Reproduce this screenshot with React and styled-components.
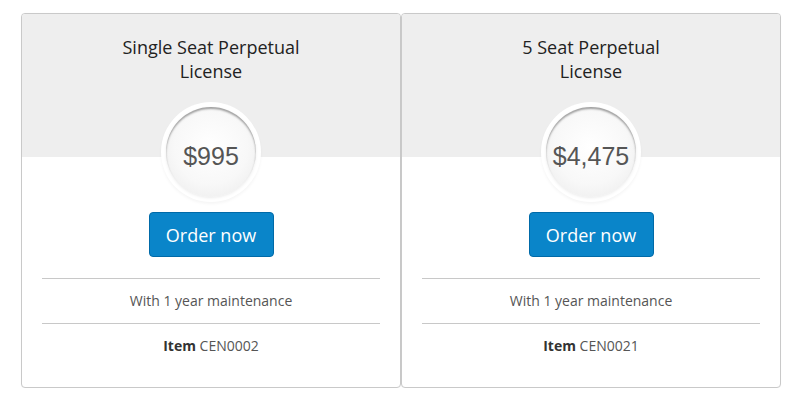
import React from "react";
import styled, { createGlobalStyle } from "styled-components";

const Global = createGlobalStyle`
  html, body { margin: 0; padding: 0; background: #fff; }
  body { font-family: "Open Sans", "Liberation Sans", sans-serif; }
`;

const Page = styled.div`
  display: flex;
  padding: 13px 0 0 21px;
`;

const Card = styled.div`
  width: 378px;
  border: 1px solid #c9c9c9;
  border-radius: 4px;
  overflow: hidden;
  background: #fff;
  padding-bottom: 19px;
  box-shadow: 0 0 1px rgba(0,0,0,0.05);
`;

const Header = styled.div`
  background: #eeeeee;
  padding-top: 21px;
  display: flex;
  flex-direction: column;
  align-items: center;
`;

const Title = styled.h3`
  margin: 0;
  font-family: "Open Sans", sans-serif;
  font-weight: 400;
  font-size: 18px;
  line-height: 24px;
  color: #222;
  text-align: center;
`;

const TitleLine = styled.span`
  display: block;
  white-space: nowrap;
`;

const Ring = styled.div`
  margin: 19px 0 -45px;
  width: 100px;
  height: 100px;
  border-radius: 50%;
  background: #fff;
  display: flex;
  align-items: center;
  justify-content: center;
  position: relative;
  z-index: 1;
  box-shadow: 0 2px 3px rgba(0,0,0,0.04);
`;

const Disc = styled.div`
  width: 90px;
  height: 90px;
  border-radius: 50%;
  background: radial-gradient(circle at 50% 45%, #ffffff 0%, #f8f8f8 55%, #e9e9e9 100%);
  box-shadow: inset 0 2px 2px rgba(0,0,0,0.35), 0 1px 3px rgba(0,0,0,0.08);
  display: flex;
  align-items: center;
  justify-content: center;
  box-sizing: border-box;
  padding-top: 8px;
`;

const Price = styled.span`
  font-family: "Liberation Sans", Arial, sans-serif;
  font-size: 25px;
  color: #555;
`;

const Body = styled.div`
  padding: 55px 20px 0;
  display: flex;
  flex-direction: column;
  align-items: center;
`;

const OrderButton = styled.button`
  width: 125px;
  height: 45px;
  border: 1px solid #006aa8;
  border-radius: 4px;
  background: #0a85c9;
  color: #fff;
  font-family: "Open Sans", sans-serif;
  font-size: 18px;
  font-weight: 500;
  cursor: pointer;
  padding: 0;
`;

const Features = styled.ul`
  list-style: none;
  margin: 21px 0 0;
  padding: 0;
  align-self: stretch;
`;

const Feature = styled.li`
  border-top: 1px solid #c8c8c8;
  padding: 12px 0;
  line-height: 20px;
  font-size: 14px;
  color: #555;
  text-align: center;
  b { color: #333; font-weight: 700; }
`;

const plans = [
  { title: ["Single Seat Perpetual", "License"], price: "$995", item: "CEN0002" },
  { title: ["5 Seat Perpetual", "License"], price: "$4,475", item: "CEN0021" },
];

export default function App() {
  return (
    <>
      <Global />
      <Page>
        {plans.map((p) => (
          <Card key={p.item}>
            <Header>
              <Title>
                {p.title.map((line) => (
                  <TitleLine key={line}>{line}</TitleLine>
                ))}
              </Title>
              <Ring>
                <Disc>
                  <Price>{p.price}</Price>
                </Disc>
              </Ring>
            </Header>
            <Body>
              <OrderButton>Order now</OrderButton>
              <Features>
                <Feature>With 1 year maintenance</Feature>
                <Feature>
                  <b>Item</b> {p.item}
                </Feature>
              </Features>
            </Body>
          </Card>
        ))}
      </Page>
    </>
  );
}
